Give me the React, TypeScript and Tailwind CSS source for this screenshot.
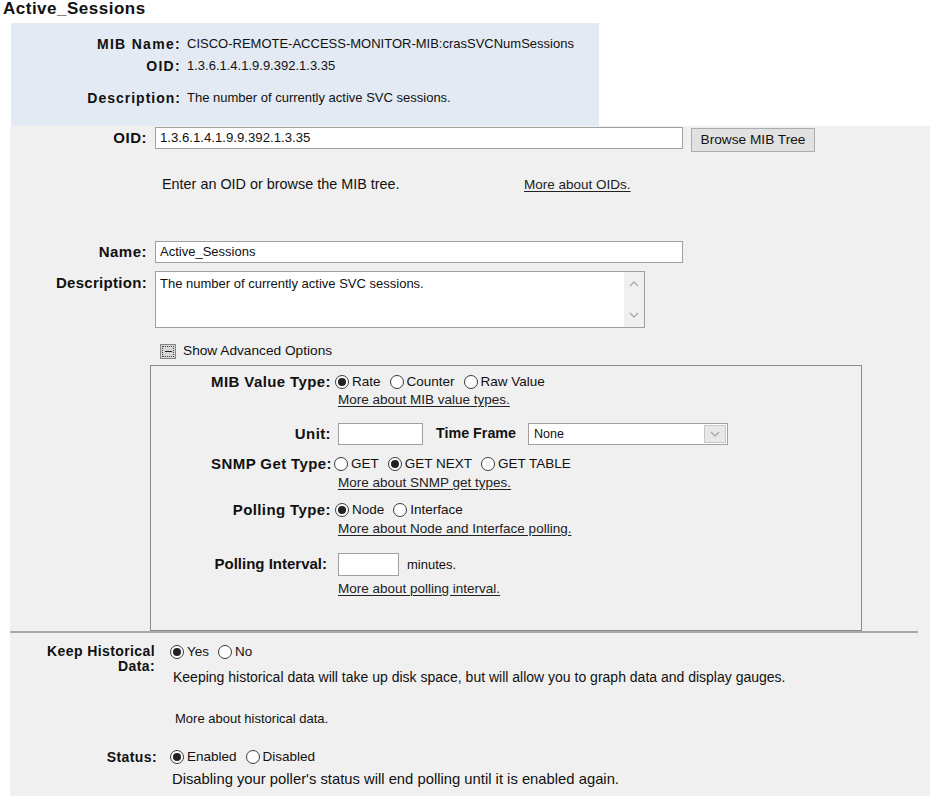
import React from "react";

function Radio({ checked, label }: { checked?: boolean; label: string }) {
  return (
    <span className="mr-[9px] inline-flex items-center">
      <span className="flex h-[14px] w-[14px] items-center justify-center rounded-full border border-[#3a3a3a] bg-white">
        {checked && <span className="h-[8px] w-[8px] rounded-full bg-[#222]" />}
      </span>
      <span className="ml-[3px]">{label}</span>
    </span>
  );
}

function Link({ children }: { children: React.ReactNode }) {
  return <span className="text-[13.5px] text-[#222] underline underline-offset-2">{children}</span>;
}

function Chevron({ up }: { up?: boolean }) {
  return (
    <svg width="10" height="6" viewBox="0 0 10 6" className="text-[#a8a8a8]">
      <path
        d={up ? "M1 5 L5 1 L9 5" : "M1 1 L5 5 L9 1"}
        fill="none"
        stroke="currentColor"
        strokeWidth="1.3"
      />
    </svg>
  );
}

export default function App() {
  return (
    <div className="relative h-[808px] w-[943px] overflow-hidden bg-white font-['Liberation_Sans',Arial,sans-serif] text-[13.5px] text-[#111]">
      {/* Title */}
      <div className="h-[23px] pl-[3px] text-[17px] font-bold leading-[17px] tracking-[0.5px]">Active_Sessions</div>

      {/* MIB summary */}
      <div className="ml-[11px] h-[103px] w-[588px] bg-[#e3eaf3] pt-[10px] text-[13px]">
        <div className="flex h-[22px] items-center">
          <div className="w-[170px] text-right text-[14px] font-bold tracking-[1.3px]">MIB Name:</div>
          <div className="ml-[6px]">CISCO-REMOTE-ACCESS-MONITOR-MIB:crasSVCNumSessions</div>
        </div>
        <div className="flex h-[22px] items-center">
          <div className="w-[170px] text-right text-[14px] font-bold tracking-[1.3px]">OID:</div>
          <div className="ml-[6px]">1.3.6.1.4.1.9.9.392.1.3.35</div>
        </div>
        <div className="mt-[10px] flex h-[22px] items-center">
          <div className="w-[170px] text-right text-[14px] font-bold tracking-[1px]">Description:</div>
          <div className="ml-[6px]">The number of currently active SVC sessions.</div>
        </div>
      </div>

      {/* Main form */}
      <div className="ml-[10px] h-[670px] w-[920px] bg-[#f0f0f0]">
        {/* OID */}
        <div className="flex h-[26px] items-start pt-[1px]">
          <div className="flex h-[22px] w-[137px] items-center justify-end text-[15px] font-bold tracking-[0.5px]">OID:</div>
          <div className="ml-[8px] flex h-[22px] w-[528px] items-center border border-[#a0a0a0] bg-white pl-[4px] text-[13.2px]">
            1.3.6.1.4.1.9.9.392.1.3.35
          </div>
          <div className="ml-[8px] mt-[1px] flex h-[24px] w-[124px] items-center justify-center border border-[#adadad] bg-[#e1e1e1] text-[13.7px]">
            Browse MIB Tree
          </div>
        </div>

        <div className="mt-[25px] flex h-[16px] items-center">
          <div className="ml-[152px] w-[362px] text-[14.4px]">Enter an OID or browse the MIB tree.</div>
          <Link>More about OIDs.</Link>
        </div>

        {/* Name */}
        <div className="mt-[48px] flex h-[22px] items-center">
          <div className="w-[137px] text-right text-[15px] font-bold tracking-[0.5px]">Name:</div>
          <div className="ml-[8px] flex h-[22px] w-[528px] items-center border border-[#a0a0a0] bg-white pl-[4px] text-[13px]">
            Active_Sessions
          </div>
        </div>

        {/* Description */}
        <div className="mt-[8px] flex h-[57px] items-start">
          <div className="w-[137px] pt-[1px] text-right text-[15px] font-bold tracking-[0.3px]">Description:</div>
          <div className="ml-[8px] flex h-[57px] w-[490px] border border-[#a0a0a0] bg-white">
            <div className="flex-1 pl-[4px] pt-[2px] text-[13px]">The number of currently active SVC sessions.</div>
            <div className="flex w-[20px] flex-col items-center justify-between bg-[#f0f0f0] py-[9px]">
              <Chevron up />
              <Chevron />
            </div>
          </div>
        </div>

        {/* Show advanced */}
        <div className="mt-[15px] flex h-[16px] items-center">
          <div className="ml-[150px] flex h-[15px] w-[16px] items-center justify-center border border-[#888] bg-[#d6d6d6]">
            <div className="flex h-[11px] w-[12px] items-center justify-center border border-dotted border-[#444]">
              <span className="h-[1px] w-[7px] bg-[#222]" />
            </div>
          </div>
          <span className="ml-[7px] text-[13.7px]">Show Advanced Options</span>
        </div>

        {/* Advanced box */}
        <div className="ml-[140px] mt-[6px] h-[266px] w-[712px] border border-[#8a8a8a] bg-[#f0f0f0]">
          <div className="mt-[7px] flex h-[18px] items-center">
            <div className="w-[180px] text-right text-[15px] font-bold tracking-[0.4px]">MIB Value Type:</div>
            <div className="ml-[4px] flex items-center">
              <Radio checked label="Rate" />
              <Radio label="Counter" />
              <Radio label="Raw Value" />
            </div>
          </div>
          <div className="ml-[187px] mt-[1px] h-[16px] leading-[16px]">
            <Link>More about MIB value types.</Link>
          </div>

          <div className="mt-[15px] flex h-[22px] items-center">
            <div className="w-[180px] text-right text-[15px] font-bold tracking-[0.4px]">Unit:</div>
            <div className="ml-[7px] h-[22px] w-[85px] border border-[#a0a0a0] bg-white" />
            <div className="ml-[13px] w-[92px] text-[14.3px] font-bold">Time Frame</div>
            <div className="flex h-[22px] w-[200px] items-center border border-[#a0a0a0] bg-white">
              <span className="flex-1 pl-[5px] text-[12.5px]">None</span>
              <span className="mr-[1px] flex h-[18px] w-[22px] items-center justify-center border border-[#c8c8c8] bg-[#e8e8e8]">
                <Chevron />
              </span>
            </div>
          </div>

          <div className="mt-[10px] flex h-[18px] items-center">
            <div className="w-[181px] text-right text-[15px] font-bold tracking-[0.4px]">SNMP Get Type:</div>
            <div className="ml-[2px] flex items-center">
              <Radio label="GET" />
              <Radio checked label="GET NEXT" />
              <Radio label="GET TABLE" />
            </div>
          </div>
          <div className="ml-[187px] mt-[2px] h-[16px] leading-[16px]">
            <Link>More about SNMP get types.</Link>
          </div>

          <div className="mt-[10px] flex h-[18px] items-center">
            <div className="w-[180px] text-right text-[15px] font-bold tracking-[0.4px]">Polling Type:</div>
            <div className="ml-[4px] flex items-center">
              <Radio checked label="Node" />
              <Radio label="Interface" />
            </div>
          </div>
          <div className="ml-[187px] mt-[2px] h-[16px] leading-[16px]">
            <Link>More about Node and Interface polling.</Link>
          </div>

          <div className="mt-[16px] flex h-[23px] items-center">
            <div className="w-[176px] text-right text-[15px] font-bold">Polling Interval:</div>
            <div className="ml-[11px] h-[23px] w-[61px] border border-[#a0a0a0] bg-white" />
            <span className="ml-[8px] text-[13px]">minutes.</span>
          </div>
          <div className="ml-[187px] mt-[5px] h-[16px] leading-[16px]">
            <Link>More about polling interval.</Link>
          </div>
        </div>

        {/* Divider */}
        <div className="h-[2px] w-[908px] bg-[#a8a8a8]" />

        {/* Historical */}
        <div className="mt-[11px] flex">
          <div className="w-[145px] text-right text-[14px] font-bold leading-[15px] tracking-[0.4px]">
            Keep Historical
            <br />
            Data:
          </div>
          <div className="ml-[15px]">
            <div className="flex h-[16px] items-center">
              <Radio checked label="Yes" />
              <Radio label="No" />
            </div>
            <div className="ml-[3px] mt-[7px] h-[16px] text-[14px]">
              Keeping historical data will take up disk space, but will allow you to graph data and display gauges.
            </div>
            <div className="ml-[5px] mt-[26px] h-[16px] text-[13px]">More about historical data.</div>
          </div>
        </div>

        {/* Status */}
        <div className="mt-[24px] flex">
          <div className="w-[147px] text-right text-[14px] font-bold leading-[16px] tracking-[0.4px]">Status:</div>
          <div className="ml-[13px]">
            <div className="flex h-[16px] items-center">
              <Radio checked label="Enabled" />
              <Radio label="Disabled" />
            </div>
            <div className="ml-[2px] mt-[3px] h-[16px] text-[14.8px]">
              Disabling your poller's status will end polling until it is enabled again.
            </div>
          </div>
        </div>
      </div>
    </div>
  );
}
